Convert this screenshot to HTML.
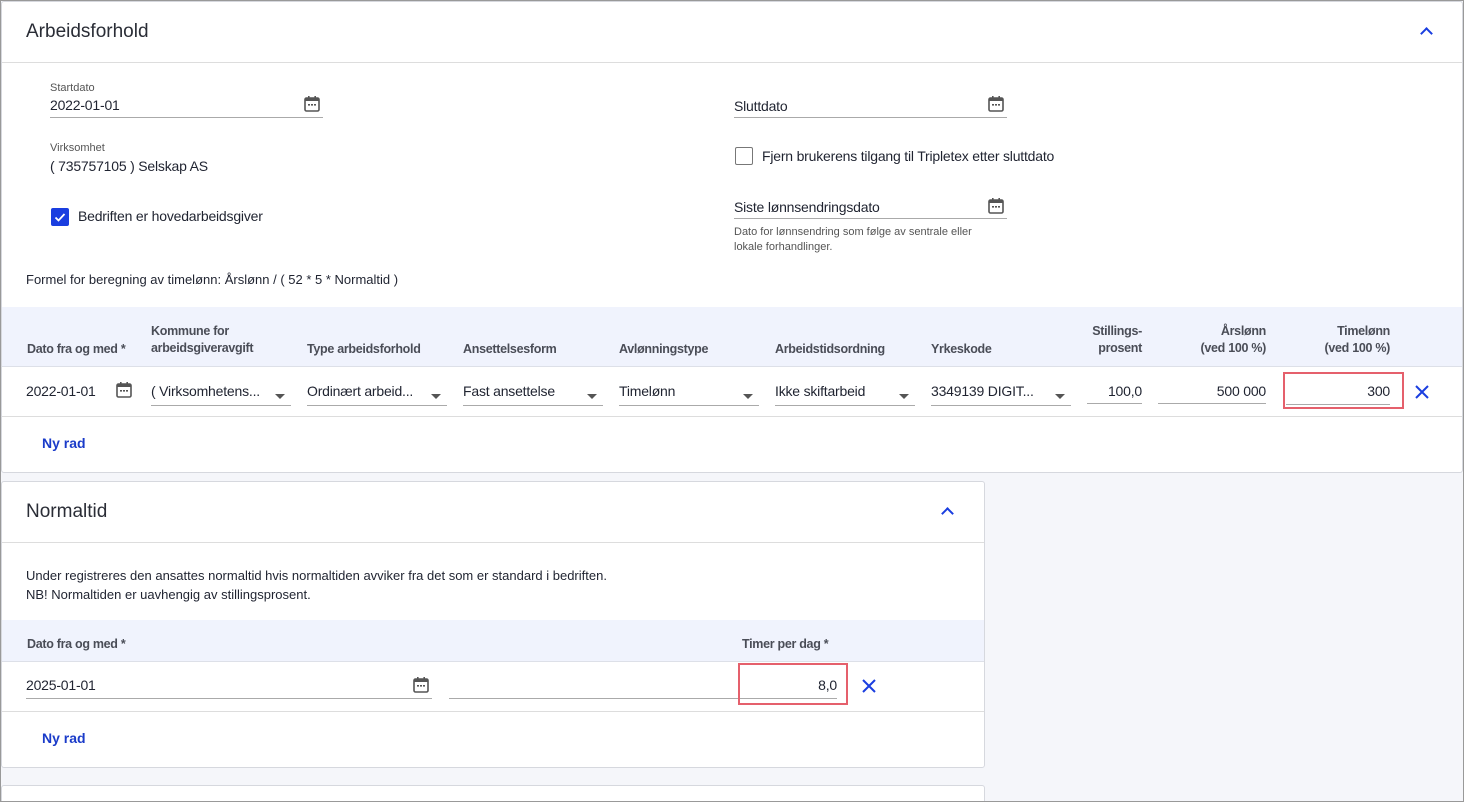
<!DOCTYPE html>
<html style="overflow:hidden"><head><meta charset="utf-8"><style>
*{box-sizing:border-box;margin:0;padding:0}
html,body{width:1464px;height:802px;overflow:hidden}
body{background:#f5f6fa;font-family:"Liberation Sans",sans-serif;color:#1f2330}
#w{position:absolute;left:0;top:0;width:1464px;height:802px;overflow:hidden;border:1px solid #999;background:#f5f6fa}
.a{position:absolute}
.card{position:absolute;background:#fff;border:1px solid #d6d8de;border-radius:3px}
.h{font-size:19px;color:#2a2d36}
.lbl{font-size:11px;color:#555}
.t{font-size:14px;color:#1f2330;white-space:nowrap;letter-spacing:-0.2px}
.ul{border-bottom:1px solid #aaa}
.th{font-size:12.5px;font-weight:bold;color:#4a4d57;line-height:17px;letter-spacing:-0.3px}
.chev{width:9px;height:9px;border-left:2px solid #1a3ee0;border-top:2px solid #1a3ee0;transform:rotate(45deg)}
.arr{width:0;height:0;border-left:5px solid transparent;border-right:5px solid transparent;border-top:5px solid #555}
.link{font-size:14px;font-weight:bold;color:#1a3bc9}
.red{border:2px solid #e5606c}
</style></head><body><div id="w">
<svg width="0" height="0" style="position:absolute"><defs><symbol id="cal" viewBox="0 0 18 18"><rect x="2" y="3" width="14" height="13" rx="1.5" fill="none" stroke="#555" stroke-width="1.6"/><rect x="2" y="3" width="14" height="3" fill="#555"/><rect x="5" y="1" width="1.6" height="3" fill="#555"/><rect x="11.4" y="1" width="1.6" height="3" fill="#555"/><rect x="5" y="9" width="2" height="1.6" fill="#555"/><rect x="8" y="9" width="2" height="1.6" fill="#555"/><rect x="11" y="9" width="2" height="1.6" fill="#555"/></symbol><symbol id="x" viewBox="0 0 16 16"><path d="M2 2L14 14M14 2L2 14" stroke="#1a3ee0" stroke-width="2"/></symbol></defs></svg>

<div class="card" style="left:0;top:0;width:1462px;height:472px">
 <div class="a h" style="left:24px;top:19px">Arbeidsforhold</div>
 <div class="a chev" style="left:1420px;top:27px"></div>
 <div class="a" style="left:0;top:60px;width:100%;border-top:1px solid #ddd"></div>
 <div class="a lbl" style="left:48px;top:80px">Startdato</div>
 <div class="a t ul" style="left:48px;top:95px;width:273px;height:21px">2022-01-01</div>
 <svg class="a" style="left:301px;top:93px" width="18" height="18"><use href="#cal"/></svg>
 <div class="a lbl" style="left:48px;top:140px">Virksomhet</div>
 <div class="a t" style="left:48px;top:156px">( 735757105 ) Selskap AS</div>
 <div class="a" style="left:49px;top:206px;width:18px;height:18px;background:#1a3ee0;border-radius:2px"><svg width="18" height="18"><path d="M4.5 9.5L7.5 12.5L13.5 6" stroke="#fff" stroke-width="1.8" fill="none"/></svg></div>
 <div class="a t" style="left:76px;top:206px">Bedriften er hovedarbeidsgiver</div>
 <div class="a t ul" style="left:732px;top:96px;width:273px;height:20px">Sluttdato</div>
 <svg class="a" style="left:985px;top:93px" width="18" height="18"><use href="#cal"/></svg>
 <div class="a" style="left:733px;top:145px;width:18px;height:18px;border:1.5px solid #777;border-radius:2px"></div>
 <div class="a t" style="left:760px;top:146px">Fjern brukerens tilgang til Tripletex etter sluttdato</div>
 <div class="a t ul" style="left:732px;top:197px;width:273px;height:20px">Siste lønnsendringsdato</div>
 <svg class="a" style="left:985px;top:195px" width="18" height="18"><use href="#cal"/></svg>
 <div class="a lbl" style="left:732px;top:223px;line-height:15px">Dato for lønnsendring som følge av sentrale eller<br>lokale forhandlinger.</div>
 <div class="a" style="left:24px;top:270px;font-size:13px">Formel for beregning av timelønn: Årslønn / ( 52 * 5 * Normaltid )</div>
 <div class="a" style="left:0;top:305px;width:100%;height:60px;background:#f0f3fd;border-bottom:1px solid #dde0e8"></div>
 <div class="a th" style="left:25px;top:339px">Dato fra og med *</div>
 <div class="a th" style="left:149px;top:321px">Kommune for<br>arbeidsgiveravgift</div>
 <div class="a th" style="left:305px;top:339px">Type arbeidsforhold</div>
 <div class="a th" style="left:461px;top:339px">Ansettelsesform</div>
 <div class="a th" style="left:617px;top:339px">Avlønningstype</div>
 <div class="a th" style="left:773px;top:339px">Arbeidstidsordning</div>
 <div class="a th" style="left:929px;top:339px">Yrkeskode</div>
 <div class="a th" style="left:1059px;top:321px;width:81px;text-align:right">Stillings-<br>prosent</div>
 <div class="a th" style="left:1159px;top:321px;width:105px;text-align:right">Årslønn<br>(ved 100 %)</div>
 <div class="a th" style="left:1279px;top:321px;width:109px;text-align:right">Timelønn<br>(ved 100 %)</div>
 <div class="a t" style="left:24px;top:381px">2022-01-01</div>
 <svg class="a" style="left:113px;top:379px" width="18" height="18"><use href="#cal"/></svg>
 <div class="a t ul" style="left:149px;top:381px;width:140px;height:23px">( Virksomhetens...</div><div class="a arr" style="left:273px;top:392px"></div>
 <div class="a t ul" style="left:305px;top:381px;width:140px;height:23px">Ordinært arbeid...</div><div class="a arr" style="left:429px;top:392px"></div>
 <div class="a t ul" style="left:461px;top:381px;width:140px;height:23px">Fast ansettelse</div><div class="a arr" style="left:585px;top:392px"></div>
 <div class="a t ul" style="left:617px;top:381px;width:140px;height:23px">Timelønn</div><div class="a arr" style="left:741px;top:392px"></div>
 <div class="a t ul" style="left:773px;top:381px;width:140px;height:23px">Ikke skiftarbeid</div><div class="a arr" style="left:897px;top:392px"></div>
 <div class="a t ul" style="left:929px;top:381px;width:140px;height:23px">3349139 DIGIT...</div><div class="a arr" style="left:1053px;top:392px"></div>
 <div class="a t ul" style="left:1085px;top:381px;width:55px;height:21px;text-align:right">100,0</div>
 <div class="a t ul" style="left:1156px;top:381px;width:108px;height:21px;text-align:right">500 000</div>
 <div class="a red" style="left:1281px;top:370px;width:121px;height:37px"></div>
 <div class="a t ul" style="left:1284px;top:381px;width:104px;height:22px;text-align:right">300</div>
 <svg class="a" style="left:1412px;top:382px" width="16" height="16"><use href="#x"/></svg>
 <div class="a" style="left:0;top:414px;width:100%;border-top:1px solid #ddd"></div>
 <div class="a link" style="left:40px;top:433px">Ny rad</div>
</div>

<div class="card" style="left:0;top:480px;width:984px;height:287px">
 <div class="a h" style="left:24px;top:19px">Normaltid</div>
 <div class="a chev" style="left:941px;top:27px"></div>
 <div class="a" style="left:0;top:60px;width:100%;border-top:1px solid #ddd"></div>
 <div class="a" style="left:24px;top:84px;font-size:13px;line-height:19px">Under registreres den ansattes normaltid hvis normaltiden avviker fra det som er standard i bedriften.<br>NB! Normaltiden er uavhengig av stillingsprosent.</div>
 <div class="a" style="left:0;top:138px;width:100%;height:42px;background:#f0f3fd;border-bottom:1px solid #dde0e8"></div>
 <div class="a th" style="left:25px;top:154px">Dato fra og med *</div>
 <div class="a th" style="left:740px;top:154px">Timer per dag *</div>
 <div class="a t ul" style="left:24px;top:195px;width:406px;height:22px">2025-01-01</div>
 <svg class="a" style="left:410px;top:194px" width="18" height="18"><use href="#cal"/></svg>
 <div class="a ul" style="left:447px;top:195px;width:388px;height:22px"></div>
 <div class="a red" style="left:736px;top:181px;width:110px;height:42px"></div>
 <div class="a t" style="left:739px;top:195px;width:96px;text-align:right">8,0</div>
 <svg class="a" style="left:859px;top:196px" width="16" height="16"><use href="#x"/></svg>
 <div class="a" style="left:0;top:229px;width:100%;border-top:1px solid #ddd"></div>
 <div class="a link" style="left:40px;top:248px">Ny rad</div>
</div>
<div class="card" style="left:0;top:784px;width:984px;height:40px"></div>
</div></body></html>
